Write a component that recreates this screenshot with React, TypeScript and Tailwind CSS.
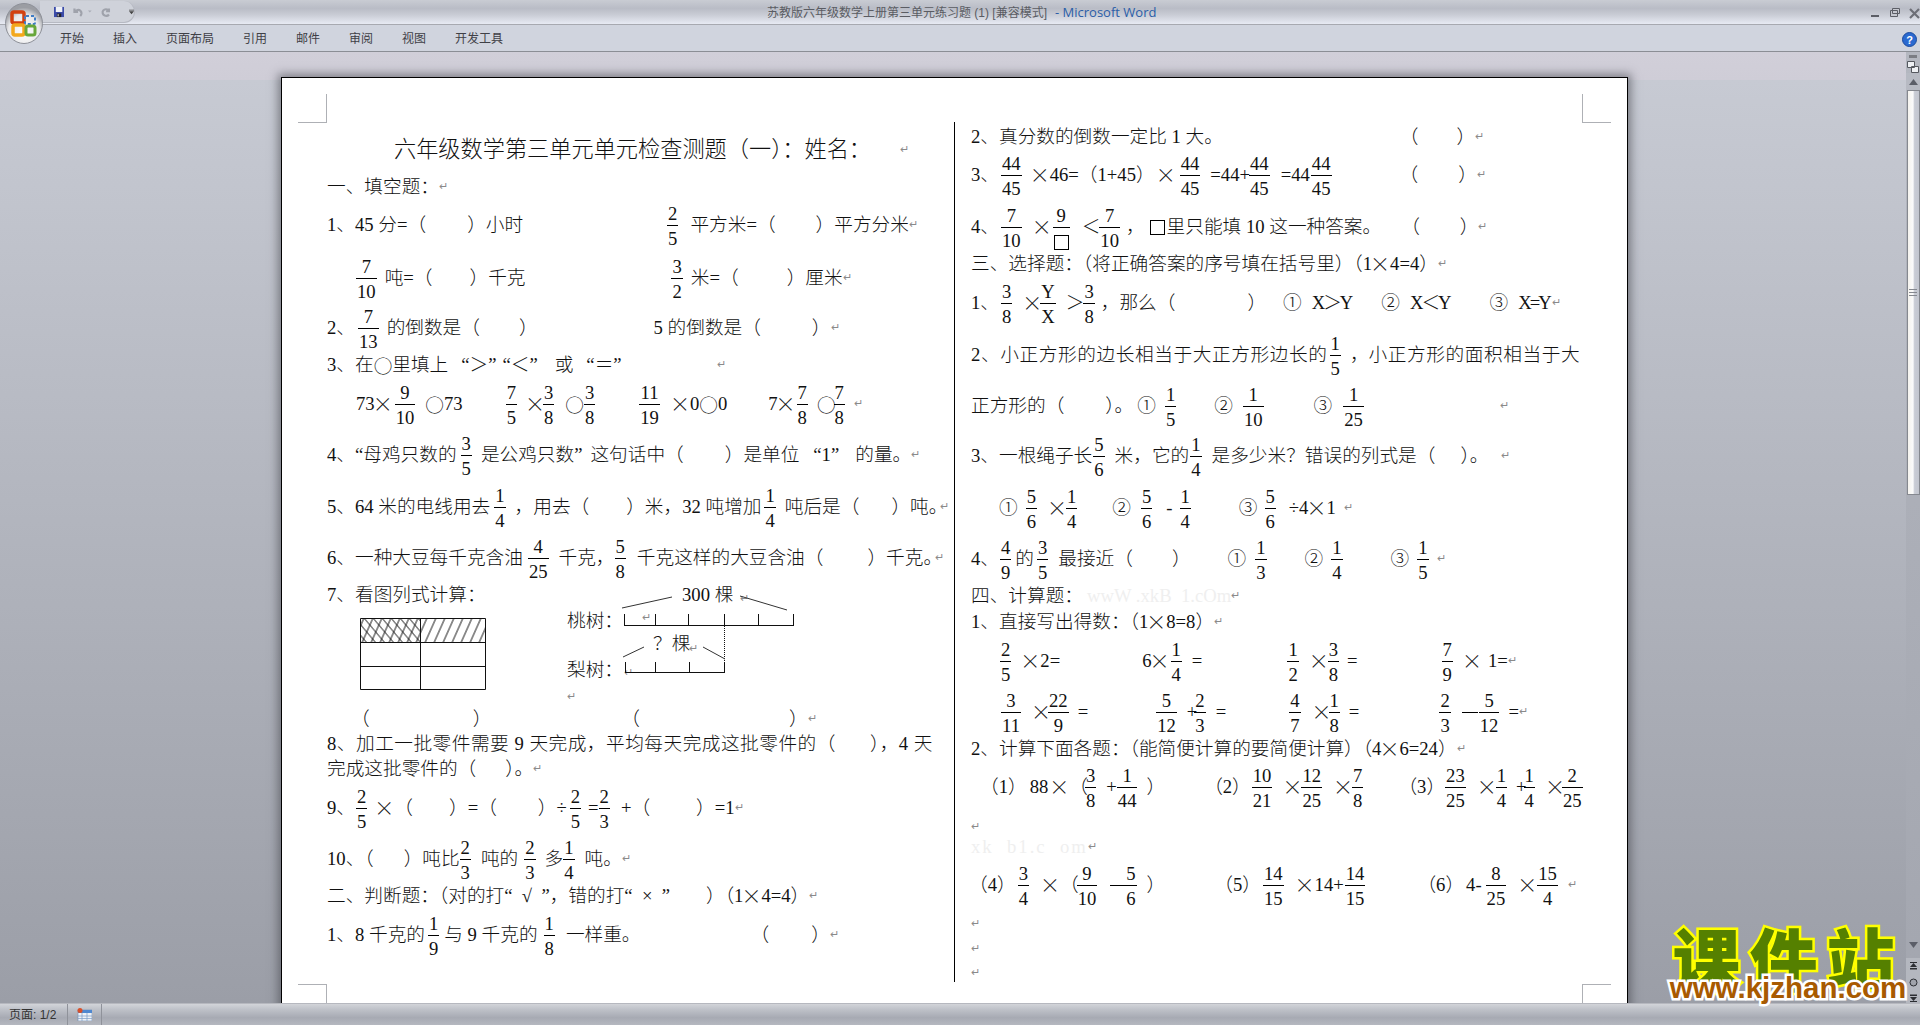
import type { ReactNode } from "react";

const Frac = ({ n, d, className = "" }: { n: ReactNode; d: ReactNode; className?: string }) => (
  <span className={`inline-flex shrink-0 flex-col items-stretch text-center ${className}`}>
    <span className="block h-[23px] px-px leading-[24px]">{n}</span>
    <span className="block h-px bg-black" />
    <span className="block h-[23px] px-px leading-[25px]">{d}</span>
  </span>
);

const Times = ({ className = "" }: { className?: string }) => (
  <span className={`inline-block w-[18px] shrink-0 -translate-x-[2px] text-center font-['Noto_Sans_CJK_SC',sans-serif] text-[20px] font-light leading-none ${className}`}>×</span>
);

const Ring = ({ className = "" }: { className?: string }) => (
  <span className={`font-['Noto_Sans_CJK_SC',sans-serif] ${className}`}>○</span>
);

const Box = ({ className = "" }: { className?: string }) => (
  <span className={`inline-block h-[15px] w-[15px] border border-black align-middle ${className}`} />
);

const Mark = ({ className = "" }: { className?: string }) => (
  <span className={`font-['DejaVu_Sans',sans-serif] text-[11px] text-[#8a8a8a] ${className}`}>↵</span>
);

const Line = ({ h, children }: { h: string; children?: ReactNode }) => (
  <div className={`flex items-center ${h}`}>{children}</div>
);

const OfficeButton = () => (
  <svg width="38" height="41" viewBox="0 0 38 41" className="absolute left-[5px] top-[3px]">
    <defs>
      <radialGradient id="orb" cx="50%" cy="70%" r="60%">
        <stop offset="0%" stopColor="#ffffff" />
        <stop offset="70%" stopColor="#e8e8ea" />
        <stop offset="100%" stopColor="#9b9da3" />
      </radialGradient>
    </defs>
    <ellipse cx="19" cy="20.5" rx="18.5" ry="20" fill="url(#orb)" stroke="#8d9098" />
    <rect x="7" y="9" width="12" height="11" rx="2" fill="none" stroke="#d2400f" strokeWidth="3.5" />
    <rect x="20" y="13" width="10" height="8" rx="1" fill="none" stroke="#3f7cc4" strokeWidth="2" strokeDasharray="3 2" />
    <rect x="8" y="22" width="11" height="10" rx="2" fill="none" stroke="#f3a81c" strokeWidth="3.5" />
    <rect x="21" y="23" width="9" height="9" rx="2" fill="none" stroke="#68a73a" strokeWidth="3" />
  </svg>
);

const QuickAccess = () => (
  <div className="absolute left-[40px] top-px flex h-[22px] w-[95px] items-center rounded-r-[11px] border-b border-r border-[#b6b9c2] bg-[#cfd2da]">
    <svg width="14" height="14" viewBox="0 0 14 14" className="ml-[14px]">
      <rect width="14" height="14" fill="#3a4aa8" />
      <rect x="2.5" y="0" width="9" height="7" fill="#eef0f6" />
      <rect x="4" y="9" width="6" height="5" fill="#20202a" />
      <rect x="5" y="10" width="1.5" height="3" fill="#d8d8e0" />
    </svg>
    <svg width="14" height="14" viewBox="0 0 14 14" className="ml-[9px]">
      <path d="M2 2v5h5M2.5 7C4 4 8 3 10.5 5.5c2 2 1.5 5-.5 7" fill="none" stroke="#9fa2ab" strokeWidth="3" />
    </svg>
    <svg width="5" height="3" viewBox="0 0 5 3" className="ml-[5px]">
      <path d="M0 0h5L2.5 3z" fill="#a9acb5" />
    </svg>
    <svg width="14" height="14" viewBox="0 0 14 14" className="ml-[9px]">
      <path d="M11 2v4h-4M11 5.5C9 2.5 5 2.5 3.2 4.8c-2 2.5-.8 6 2 7.2 2 .8 4.5.2 5.8-1.5" fill="none" stroke="#9fa2ab" strokeWidth="3" />
    </svg>
    <svg width="7" height="6" viewBox="0 0 7 6" className="ml-[18px]">
      <path d="M0 0h7v1H0zM0 2h7L3.500 6z" fill="#444" />
    </svg>
  </div>
);

const TitleBar = () => (
  <div className="flex h-[25px] shrink-0 items-center border-b border-[#a7a9b0] bg-[linear-gradient(to_bottom,#c9ccd3_0,#b9bcc6_35%,#c8cbd4_60%,#e7eaf3_100%)] pt-[2px] font-['Liberation_Sans','Noto_Sans_CJK_SC',sans-serif]">
    <div className="w-[767px] shrink-0" />
    <span className="text-[12px] text-[#5a5c63]">苏教版六年级数学上册第三单元练习题 (1) [兼容模式]</span>
    <span className="ml-[8px] font-['Open_Sans',sans-serif] text-[13px] text-[#2a5ea8]">- Microsoft Word</span>
    <div className="ml-auto flex items-center gap-[9px]">
      <svg width="10" height="10" viewBox="0 0 10 10"><rect x="0" y="7" width="8" height="2" fill="#5c5e66" /></svg>
      <svg width="10" height="10" viewBox="0 0 10 10"><path d="M2.500 .5h7v5h-7zM.5 2.500h7v6h-7z" fill="#c6c8d0" stroke="#5c5e66" /></svg>
      <svg width="11" height="11" viewBox="0 0 11 11"><path d="M1 1l9 9M10 1l-9 9" stroke="#6d6f77" strokeWidth="2.200" /></svg>
    </div>
  </div>
);

const TabBar = () => (
  <div className="flex h-[27px] shrink-0 items-center gap-[29px] border-b border-[#8b8e95] bg-[#d0d4de] pl-[60px] pt-[2px] font-['Liberation_Sans','Noto_Sans_CJK_SC',sans-serif] text-[12px] text-[#3f4046]">
    <span>开始</span>
    <span>插入</span>
    <span>页面布局</span>
    <span>引用</span>
    <span>邮件</span>
    <span>审阅</span>
    <span>视图</span>
    <span>开发工具</span>
    <svg width="15" height="15" viewBox="0 0 15 15" className="ml-auto mr-[3px]">
      <circle cx="7.500" cy="7.500" r="7" fill="#2a69d0" stroke="#1b4a9c" />
      <text x="7.500" y="11.500" textAnchor="middle" fontSize="11" fontWeight="700" fill="#fff">?</text>
    </svg>
  </div>
);

const Scrollbar = () => (
  <div className="flex w-[14px] shrink-0 flex-col items-center bg-[linear-gradient(to_bottom,#b4b7c0,#a3a6af)]">
    <div className="mt-[3px] h-[3px] w-[8px] bg-[#7b7d84]" />
    <svg width="12" height="12" viewBox="0 0 12 12" className="mt-[3px]">
      <path d="M.5.5h7v6h-7zM4.500 5.500h7v6h-7z" fill="#eef0f4" stroke="#55585f" />
    </svg>
    <div className="flex h-[17px] w-full items-center justify-center bg-[#b7bac3]">
      <svg width="9" height="6" viewBox="0 0 9 6"><path d="M4.500 0L9 6H0z" fill="#5b5e68" /></svg>
    </div>
    <div className="flex h-[405px] w-[13px] shrink-0 items-center justify-center border border-[#85888f] bg-[linear-gradient(to_right,#f5f3ee,#fbfbfb_45%,#c9ccd5_60%,#c3c6cf)]">
      <div className="h-[7px] w-[8px] border-y border-[#85888f] bg-[linear-gradient(to_bottom,transparent_43%,#85888f_43%,#85888f_57%,transparent_57%)]" />
    </div>
    <div className="flex-1" />
    <svg width="9" height="6" viewBox="0 0 9 6" className="mb-[10px]"><path d="M0 0h9L4.500 6z" fill="#5b5e68" /></svg>
    <div className="flex h-[45px] w-full flex-col items-center justify-between bg-[#b4b7bf] pb-[1px] pt-[4px]">
      <svg width="9" height="9" viewBox="0 0 9 9"><path d="M1 0h7v1H1zM4.500 1L8 5H1zM1 6h7v1.500H1z" fill="#2c2e33" /></svg>
      <svg width="9" height="9" viewBox="0 0 9 9"><circle cx="4.500" cy="4.500" r="3.500" fill="#a0a3ab" stroke="#2c2e33" /></svg>
      <svg width="9" height="9" viewBox="0 0 9 9"><path d="M1 1.500h7V3H1zM1 4h7L4.500 8zM1 8h7v1H1z" fill="#2c2e33" /></svg>
    </div>
  </div>
);

const Corner = ({ className }: { className: string }) => (
  <div className={`absolute h-[29px] w-[29px] border-[#aeb0b5] ${className}`} />
);

const CountFigure = () => (
  <svg width="127" height="73" viewBox="0 0 127 73" className="ml-[33px] mt-[11px]">
    <defs>
      <pattern id="slash" width="9" height="23" patternUnits="userSpaceOnUse" patternTransform="skewX(-24)">
        <path d="M4 0v23" stroke="#111" strokeWidth="1" />
      </pattern>
      <pattern id="back" width="9" height="23" patternUnits="userSpaceOnUse" patternTransform="skewX(40)">
        <path d="M4 0v23" stroke="#111" strokeWidth="1" />
      </pattern>
    </defs>
    <rect x="0" y="0" width="61" height="24" fill="url(#slash)" />
    <rect x="0" y="0" width="61" height="24" fill="url(#back)" />
    <rect x="61" y="0" width="65" height="24" fill="url(#slash)" />
    <path d="M.5.5h125v71H.5zM.5 24.500h125M.5 48.500h125M60.500.5v71" fill="none" stroke="#111" />
  </svg>
);

const TreeFigure = () => (
  <svg width="245" height="119" viewBox="0 0 245 119" className="-mt-px text-[18.67px]">
    <g fill="#111" stroke="none">
      <text x="0" y="41">桃树：</text>
      <text x="115" y="15">300 棵</text>
      <text x="86" y="64">？棵</text>
      <text x="0" y="90">梨树：</text>
    </g>
    <g fill="#8a8a8a" fontSize="11" stroke="none" fontFamily="DejaVu Sans">
      <text x="173" y="16">↵</text>
      <text x="75" y="35">↵</text>
      <text x="122" y="66">↵</text>
      <text x="57" y="90">↵</text>
      <text x="0" y="114">↵</text>
    </g>
    <path d="M57.500 28v11M88.500 28v11M121.500 28v11M157.500 28v11M191.500 28v11M226.500 28v11M57 39.500h170M58.500 76v10M88.500 76v10M122.500 76v10M157.500 76v10M58 86.500h100" fill="none" stroke="#111" />
    <path d="M157.500 40v44" stroke="#111" strokeDasharray="1 1" />
    <path d="M55 22l50-11M173 10l47 14M56 71l21-10M136 61l22 12" stroke="#333" fill="none" />
  </svg>
);

const LeftColumn = () => (
  <div className="ml-[45px] w-[627px] shrink-0 pt-[51px]">
    <Line h="h-[42px]">
      <span className="ml-[67px] text-[22.2px]">六年级数学第三单元单元检查测题（一）：姓名：</span>
      <Mark className="ml-[29px]" />
    </Line>
    <Line h="h-[32px]">
      <span>一、填空题：</span>
      <Mark />
    </Line>
    <Line h="h-[44px]">
      <span>1、45 分=（</span>
      <span className="ml-[41px]">）小时</span>
      <Frac n="2" d="5" className="ml-[144px]" />
      <span className="ml-[12px]">平方米=（</span>
      <span className="ml-[40px]">）平方分米</span>
      <Mark />
    </Line>
    <Line h="h-[62px]">
      <Frac n="7" d="10" className="ml-[29px]" />
      <span className="ml-[8px]">吨=（</span>
      <span className="ml-[37px]">）千克</span>
      <Frac n="3" d="2" className="ml-[146px]" />
      <span className="ml-[8px]">米=（</span>
      <span className="ml-[48px]">）厘米</span>
      <Mark />
    </Line>
    <Line h="h-[38px]">
      <span>2、</span>
      <Frac n="7" d="13" className="ml-[3px]" />
      <span className="ml-[8px]">的倒数是（</span>
      <span className="ml-[39px]">）</span>
      <span className="ml-[116px]">5 的倒数是（</span>
      <span className="ml-[51px]">）</span>
      <Mark />
    </Line>
    <Line h="h-[36px]">
      <span>3、在</span>
      <Ring />
      <span>里填上</span>
      <span className="ml-[13px]">“＞”</span>
      <span className="ml-[6px]">“＜”</span>
      <span className="ml-[17px]">或</span>
      <span className="ml-[13px]">“＝”</span>
      <Mark className="ml-[95px]" />
    </Line>
    <Line h="h-[42px]">
      <span className="ml-[29px]">73</span>
      <Times />
      <Frac n="9" d="10" className="ml-[2px]" />
      <Ring className="ml-[10px]" />
      <span>73</span>
      <Frac n="7" d="5" className="ml-[43px]" />
      <Times className="ml-[10px]" />
      <Frac n="3" d="8" className="ml-[-2px]" />
      <Ring className="ml-[11px]" />
      <Frac n="3" d="8" />
      <Frac n="11" d="19" className="ml-[44px]" />
      <Times className="ml-[12px]" />
      <span>0</span>
      <Ring />
      <span>0</span>
      <span className="ml-[41px]">7</span>
      <Times />
      <Frac n="7" d="8" className="ml-px" />
      <Ring className="ml-[9px]" />
      <Frac n="7" d="8" className="ml-[-2px]" />
      <Mark className="ml-[9px]" />
    </Line>
    <Line h="h-[60px]">
      <span>4、“母鸡只数的</span>
      <Frac n="3" d="5" className="ml-[4px]" />
      <span className="ml-[9px]">是公鸡只数”</span>
      <span className="ml-[8px]">这句话中（</span>
      <span className="ml-[41px]">）是单位</span>
      <span className="ml-[14px]">“1”</span>
      <span className="ml-[16px]">的量。</span>
      <Mark />
    </Line>
    <Line h="h-[44px]">
      <span>5、64 米的电线用去</span>
      <Frac n="1" d="4" className="ml-[4px]" />
      <span className="ml-[9px]">，用去（</span>
      <span className="ml-[37px]">）米，32 吨增加</span>
      <Frac n="1" d="4" className="ml-[3px]" />
      <span className="ml-[9px]">吨后是（</span>
      <span className="ml-[32px]">）吨。</span>
      <Mark className="ml-[-7px]" />
    </Line>
    <Line h="h-[58px]">
      <span>6、一种大豆每千克含油</span>
      <Frac n="4" d="25" className="ml-[5px]" />
      <span className="ml-[10px]">千克，</span>
      <Frac n="5" d="8" />
      <span className="ml-[11px]">千克这样的大豆含油（</span>
      <span className="ml-[44px]">）千克。</span>
      <Mark className="ml-[-7px]" />
    </Line>
    <div className="flex h-[119px]">
      <div className="w-[240px] shrink-0">
        <div className="h-[20px] leading-[16px]">7、看图列式计算：</div>
        <CountFigure />
      </div>
      <TreeFigure />
    </div>
    <Line h="h-[26px]">
      <span className="ml-[24px]">（</span>
      <span className="ml-[103px]">）</span>
      <span className="ml-[130px]">（</span>
      <span className="ml-[149px]">）</span>
      <Mark />
    </Line>
    <Line h="h-[24px]">
      <span className="tracking-[0.5px]">8、加工一批零件需要 9 天完成，平均每天完成这批零件的（</span>
      <span className="ml-[34px] tracking-[0.5px]">），4 天</span>
    </Line>
    <Line h="h-[26px]">
      <span>完成这批零件的（</span>
      <span className="ml-[29px]">）。</span>
      <Mark />
    </Line>
    <Line h="h-[52px]">
      <span>9、</span>
      <Frac n="2" d="5" className="ml-px" />
      <Times className="ml-[9px]" />
      <span>（</span>
      <span className="ml-[36px]">）=（</span>
      <span className="ml-[41px]">）÷</span>
      <Frac n="2" d="5" className="ml-[3px]" />
      <span className="ml-[7px]">=</span>
      <Frac n="2" d="3" />
      <span className="ml-[11px]">+（</span>
      <span className="ml-[46px]">）=1</span>
      <Mark />
    </Line>
    <Line h="h-[50px]">
      <span>10、（</span>
      <span className="ml-[30px]">）吨比</span>
      <Frac n="2" d="3" />
      <span className="ml-[10px]">吨的</span>
      <Frac n="2" d="3" className="ml-[6px]" />
      <span className="ml-[9px]">多</span>
      <Frac n="1" d="4" />
      <span className="ml-[10px]">吨。</span>
      <Mark />
    </Line>
    <Line h="h-[24px]">
      <span>二、判断题：（对的打“  √  ”，错的打“  ×  ”</span>
      <span className="ml-[36px]">）（1</span>
      <Times />
      <span>4=4）</span>
      <Mark />
    </Line>
    <Line h="h-[54px]">
      <span>1、8 千克的</span>
      <Frac n="1" d="9" className="ml-[3px]" />
      <span className="ml-[5px]">与 9 千克的</span>
      <Frac n="1" d="8" className="ml-[6px]" />
      <span className="ml-[11px]">一样重。</span>
      <span className="ml-[110px]">（</span>
      <span className="ml-[42px]">）</span>
      <Mark />
    </Line>
  </div>
);

const RightColumn = () => (
  <div className="ml-[16px] w-[640px] shrink-0 pt-[48px]">
    <Line h="h-[22px]">
      <span>2、真分数的倒数一定比 1 大。</span>
      <span className="ml-[177px]">（</span>
      <span className="ml-[38px]">）</span>
      <Mark />
    </Line>
    <Line h="h-[54px]">
      <span>3、</span>
      <Frac n="44" d="45" className="ml-[2px]" />
      <Times className="ml-[10px]" />
      <span>46=（1+45）</span>
      <Times className="ml-[3px]" />
      <Frac n="44" d="45" className="ml-[4px]" />
      <span className="ml-[10px]">=44+</span>
      <Frac n="44" d="45" className="ml-[-1px]" />
      <span className="ml-[11px]">=44</span>
      <Frac n="44" d="45" className="ml-px" />
      <span className="ml-[68px]">（</span>
      <span className="ml-[40px]">）</span>
      <Mark />
    </Line>
    <Line h="h-[50px]">
      <span>4、</span>
      <Frac n="7" d="10" className="ml-[2px]" />
      <Times className="ml-[12px]" />
      <Frac n="9" d={<Box />} className="ml-px" />
      <span className="ml-[12px]">＜</span>
      <Frac n="7" d="10" className="ml-[-1px]" />
      <span className="ml-[6px]">，</span>
      <Box className="ml-[5px]" />
      <span className="ml-[2px]">里只能填 10 这一种答案。</span>
      <span className="ml-[20px]">（</span>
      <span className="ml-[40px]">）</span>
      <Mark />
    </Line>
    <Line h="h-[24px]">
      <span>三、选择题：（将正确答案的序号填在括号里）（1</span>
      <Times />
      <span>4=4）</span>
      <Mark />
    </Line>
    <Line h="h-[54px]">
      <span>1、</span>
      <Frac n="3" d="8" className="ml-[2px]" />
      <Times className="ml-[12px]" />
      <Frac n="Y" d="X" className="ml-[-2px]" />
      <span className="ml-[10px]">＞</span>
      <Frac n="3" d="8" className="ml-[-1px]" />
      <span className="ml-[6px]">，那么（</span>
      <span className="ml-[72px]">）</span>
      <span className="ml-[17px]">①</span>
      <span className="ml-[10px] tracking-[-2px]">X＞Y</span>
      <span className="ml-[30px]">②</span>
      <span className="ml-[10px] tracking-[-2px]">X＜Y</span>
      <span className="ml-[40px]">③</span>
      <span className="ml-[10px] tracking-[-2px]">X=Y</span>
      <Mark className="ml-[2px]" />
    </Line>
    <Line h="h-[50px]">
      <span className="tracking-[0.6px]">2、小正方形的边长相当于大正方形边长的</span>
      <Frac n="1" d="5" className="ml-[2px]" />
      <span className="ml-[9px]">，</span>
      <span className="tracking-[0.6px]">小正方形的面积相当于大</span>
    </Line>
    <Line h="h-[52px]">
      <span>正方形的（</span>
      <span className="ml-[41px]">）。</span>
      <span className="ml-[4px]">①</span>
      <Frac n="1" d="5" className="ml-[9px]" />
      <span className="ml-[38px]">②</span>
      <Frac n="1" d="10" className="ml-[10px]" />
      <span className="ml-[50px]">③</span>
      <Frac n="1" d="25" className="ml-[11px]" />
      <Mark className="ml-[136px]" />
    </Line>
    <Line h="h-[48px]">
      <span>3、一根绳子长</span>
      <Frac n="5" d="6" className="ml-px" />
      <span className="ml-[10px]">米，它的</span>
      <Frac n="1" d="4" className="ml-px" />
      <span className="ml-[10px]">是多少米？错误的列式是（</span>
      <span className="ml-[25px]">）。</span>
      <Mark className="ml-[13px]" />
    </Line>
    <Line h="h-[56px]">
      <span className="ml-[28px]">①</span>
      <Frac n="5" d="6" className="ml-[8px]" />
      <Times className="ml-[12px]" />
      <Frac n="1" d="4" className="ml-[-1px]" />
      <span className="ml-[35px]">②</span>
      <Frac n="5" d="6" className="ml-[10px]" />
      <span className="ml-[14px]">-</span>
      <Frac n="1" d="4" className="ml-[7px]" />
      <span className="ml-[48px]">③</span>
      <Frac n="5" d="6" className="ml-[7px]" />
      <span className="ml-[13px]">÷4</span>
      <Times />
      <span>1</span>
      <Mark className="ml-[8px]" />
    </Line>
    <Line h="h-[46px]">
      <span>4、</span>
      <Frac n="4" d="9" className="ml-px" />
      <span className="ml-[4px]">的</span>
      <Frac n="3" d="5" className="ml-[3px]" />
      <span className="ml-[10px]">最接近（</span>
      <span className="ml-[39px]">）</span>
      <span className="ml-[37px]">①</span>
      <Frac n="1" d="3" className="ml-[9px]" />
      <span className="ml-[38px]">②</span>
      <Frac n="1" d="4" className="ml-[8px]" />
      <span className="ml-[48px]">③</span>
      <Frac n="1" d="5" className="ml-[8px]" />
      <Mark className="ml-[8px]" />
    </Line>
    <Line h="h-[28px]">
      <span>四、计算题：</span>
      <span className="ml-[4px] text-[#efefef]">wwW .xkB  1.cOm</span>
      <Mark />
    </Line>
    <Line h="h-[24px]">
      <span>1、直接写出得数：（1</span>
      <Times />
      <span>8=8）</span>
      <Mark />
    </Line>
    <Line h="h-[54px]">
      <Frac n="2" d="5" className="ml-[29px]" />
      <Times className="ml-[11px]" />
      <span>2=</span>
      <span className="ml-[82px]">6</span>
      <Times />
      <Frac n="1" d="4" className="ml-px" />
      <span className="ml-[10px]">=</span>
      <Frac n="1" d="2" className="ml-[85px]" />
      <Times className="ml-[12px]" />
      <Frac n="3" d="8" className="ml-[-1px]" />
      <span className="ml-[8px]">=</span>
      <Frac n="7" d="9" className="ml-[84px]" />
      <Times className="ml-[11px]" />
      <span className="ml-[6px]">1=</span>
      <Mark />
    </Line>
    <Line h="h-[48px]">
      <Frac n="3" d="11" className="ml-[30px]" />
      <Times className="ml-[12px]" />
      <Frac n="22" d="9" className="ml-[-3px]" />
      <span className="ml-[9px]">=</span>
      <Frac n="5" d="12" className="ml-[68px]" />
      <span className="ml-[10px]">+</span>
      <Frac n="2" d="3" className="ml-[-3px]" />
      <span className="ml-[10px]">=</span>
      <Frac n="4" d="7" className="ml-[63px]" />
      <Times className="ml-[13px]" />
      <Frac n="1" d="8" className="ml-[-3px]" />
      <span className="ml-[9px]">=</span>
      <Frac n="2" d="3" className="ml-[80px]" />
      <span className="ml-[11px] inline-block h-px w-[16px] bg-black" />
      <Frac n="5" d="12" className="ml-px" />
      <span className="ml-[9px]">=</span>
      <Mark />
    </Line>
    <Line h="h-[26px]">
      <span>2、计算下面各题：（能简便计算的要简便计算）（4</span>
      <Times />
      <span>6=24）</span>
      <Mark />
    </Line>
    <Line h="h-[50px]">
      <span className="ml-[9px]">（1）</span>
      <span className="ml-[3px]">88</span>
      <Times className="ml-[3px]" />
      <span>（</span>
      <Frac n="3" d="8" className="ml-[-3px]" />
      <span className="ml-[10px]">+</span>
      <Frac n="1" d="44" />
      <span className="ml-[9px]">）</span>
      <span className="ml-[39px]">（2）</span>
      <Frac n="10" d="21" className="ml-px" />
      <Times className="ml-[12px]" />
      <Frac n="12" d="25" className="ml-[-1px]" />
      <Times className="ml-[13px]" />
      <Frac n="7" d="8" className="ml-[-1px]" />
      <span className="ml-[35px]">（3）</span>
      <Frac n="23" d="25" />
      <Times className="ml-[13px]" />
      <Frac n="1" d="4" className="ml-[-1px]" />
      <span className="ml-[9px]">+</span>
      <Frac n="1" d="4" className="ml-[-3px]" />
      <Times className="ml-[12px]" />
      <Frac n="2" d="25" className="ml-[-3px]" />
    </Line>
    <Line h="h-[30px]">
      <Mark />
    </Line>
    <Line h="h-[10px]">
      <span className="text-[#efefef] tracking-[2px]">xk  b1.c  om</span>
      <Mark />
    </Line>
    <Line h="h-[66px]">
      <span className="ml-[-2px]">（4）</span>
      <Frac n="3" d="4" className="ml-[2px]" />
      <Times className="ml-[13px]" />
      <span>（</span>
      <Frac n="9" d="10" className="ml-[-2px]" />
      <span className="ml-[13px] inline-block h-px w-[16px] bg-black" />
      <Frac n="5" d="6" className="ml-[-1px]" />
      <span className="ml-[10px]">）</span>
      <span className="ml-[49px]">（5）</span>
      <Frac n="14" d="15" className="ml-[2px]" />
      <Times className="ml-[13px]" />
      <span>14+</span>
      <Frac n="14" d="15" className="ml-px" />
      <span className="ml-[52px]">（6）</span>
      <span className="ml-[2px]">4-</span>
      <Frac n="8" d="25" className="ml-[4px]" />
      <Times className="ml-[13px]" />
      <Frac n="15" d="4" />
      <Mark className="ml-[10px]" />
    </Line>
    <Line h="h-[12px]">
      <Mark />
    </Line>
    <Line h="h-[38px]">
      <Mark />
    </Line>
    <Line h="h-[10px]">
      <Mark />
    </Line>
  </div>
);

const DocPage = () => (
  <div className="relative mt-[25px] ml-[281px] flex h-[1000px] w-[1347px] shrink-0 border border-black bg-white text-[18.67px] font-light leading-[24px] text-[#111] whitespace-pre shadow-[0_0_9px_3px_rgba(60,62,70,0.55)]">
    <Corner className="left-[16px] top-[16px] border-b border-r" />
    <Corner className="right-[16px] top-[16px] border-b border-l" />
    <Corner className="left-[16px] top-[906px] border-t border-r" />
    <Corner className="right-[16px] top-[906px] border-t border-l" />
    <LeftColumn />
    <div className="mt-[44px] h-[860px] w-px shrink-0 bg-black" />
    <RightColumn />
  </div>
);

const SiteLogo = () => (
  <div className="absolute bottom-[26px] right-[16px] flex w-[232px] flex-col items-center">
    <div className="font-['Noto_Sans_CJK_SC',sans-serif] text-[68px] font-black leading-[56px] tracking-[9px] text-[#558000] [-webkit-text-stroke:5px_#ffff00] [paint-order:stroke_fill]">
      课件站
    </div>
    <div className="-mt-[9px] font-['Liberation_Sans',sans-serif] text-[29.5px] font-bold leading-[23px] text-[#a85a00] [-webkit-text-stroke:5px_#ffffff] [paint-order:stroke_fill]">
      www.kjzhan.com
    </div>
  </div>
);

const StatusBar = () => (
  <div className="flex h-[22px] shrink-0 items-center border-t border-[#b6b8bf] bg-[linear-gradient(to_bottom,#d2d4d9_0,#bfc2c9_25%,#a7aab3_65%,#b5b8c0_100%)] font-['Liberation_Sans','Noto_Sans_CJK_SC',sans-serif] text-[12px] text-[#333]">
    <span className="w-[67px] shrink-0 pl-[9px]">页面: 1/2</span>
    <div className="flex h-full w-[35px] shrink-0 items-center justify-center border-x border-[#8f929a]">
      <svg width="15" height="13" viewBox="0 0 15 13">
        <rect x="1" y="2" width="14" height="11" fill="#eef2f8" stroke="#6f8fb8" strokeWidth=".6" />
        <rect x="1" y="2" width="14" height="3" fill="#4f88d0" />
        <path d="M5 5v8M10 5v8M1 8h14M1 10.500h14" stroke="#7a9cc6" strokeWidth=".7" />
        <circle cx="3" cy="2.500" r="2.500" fill="#d8502a" />
      </svg>
    </div>
  </div>
);

export default function App() {
  return (
    <div className="relative flex h-[1025px] w-[1920px] flex-col overflow-hidden font-['Liberation_Serif','Noto_Sans_CJK_SC',serif]">
      <TitleBar />
      <TabBar />
      <div className="flex min-h-0 flex-1 bg-[linear-gradient(to_bottom,#d1cfd9_0,#cfcdd7_28px,#c7cad3_28px,#9b9ea7_100%)]">
        <div className="relative min-w-0 flex-1 overflow-hidden">
          <DocPage />
        </div>
        <Scrollbar />
      </div>
      <StatusBar />
      <QuickAccess />
      <OfficeButton />
      <SiteLogo />
    </div>
  );
}
